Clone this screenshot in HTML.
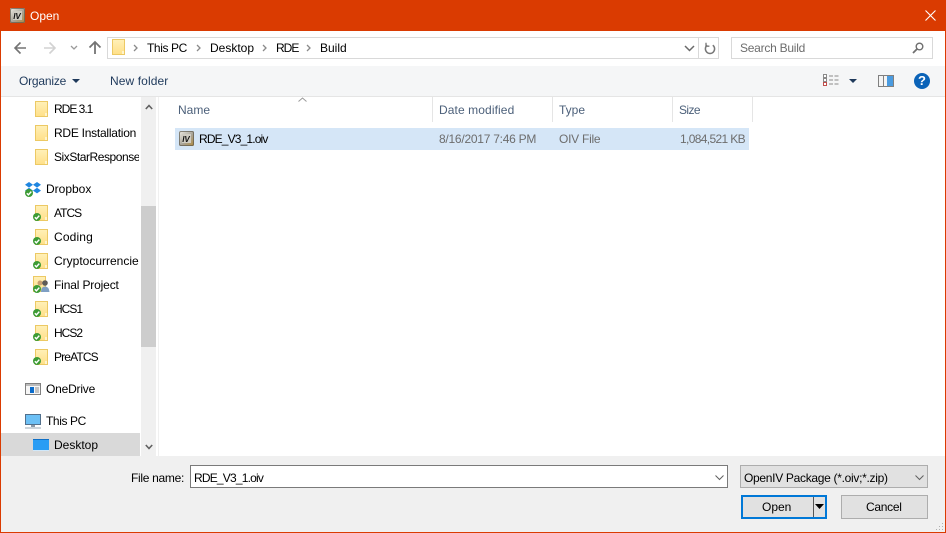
<!DOCTYPE html>
<html><head><meta charset="utf-8"><style>
html,body{margin:0;padding:0;width:946px;height:533px;overflow:hidden;background:#fff}
body{position:relative;font-family:"Liberation Sans",sans-serif;font-size:12px;color:#000}
.r{position:absolute}
.t{position:absolute;white-space:nowrap;line-height:16px;height:16px}
svg{position:absolute;overflow:visible}
.g{color:#6d6d6d}
.h{color:#4c607a}
.n{overflow:hidden}
</style></head><body>
<svg width="0" height="0" style="position:absolute"><defs>
<linearGradient id="fg" x1="0" y1="0" x2="0" y2="1"><stop offset="0" stop-color="#fff0b8"/><stop offset="1" stop-color="#ffe088"/></linearGradient>
<linearGradient id="ig" x1="0" y1="0" x2="1" y2="1"><stop offset="0" stop-color="#f0eee6"/><stop offset=".55" stop-color="#a8a498"/><stop offset="1" stop-color="#b08a3c"/></linearGradient>
<g id="fo"><rect x="0.500" y="0.500" width="12" height="15" fill="url(#fg)" stroke="#ecc964"/><rect x="10" y="12" width="2" height="3" fill="#fff4cc"/></g>
<g id="ck"><circle cx="4" cy="4" r="4" fill="#3d9b35"/><path d="M1.800 4.200L3.400 5.800L6.300 2.600" fill="none" stroke="#fff" stroke-width="1.4"/></g>
<g id="iv"><rect x="0" y="0" width="15" height="15" rx="1.500" fill="url(#ig)"/><rect x="0.500" y="0.500" width="14" height="14" rx="1.500" fill="none" stroke="#5e5a4e" stroke-opacity=".7"/><rect x="3" y="3" width="9" height="9" fill="#cfccc2"/><text x="3.200" y="10.800" font-family="Liberation Sans" font-size="8" font-weight="bold" font-style="italic" fill="#111">IV</text></g>
</defs></svg>

<div class="r" style="left:0;top:0;width:946px;height:31px;background:#da3b01"></div>
<div class="r" style="left:0;top:31px;width:1px;height:502px;background:#da3b01"></div>
<div class="r" style="left:945px;top:31px;width:1px;height:502px;background:#da3b01"></div>
<div class="r" style="left:0;top:532px;width:946px;height:1px;background:#da3b01"></div>
<svg style="left:10px;top:8px" width="15" height="15"><use href="#iv"/></svg>
<div class="t" style="left:30px;top:8px;color:#fff">Open</div>
<svg style="left:925px;top:10px" width="11" height="11"><path d="M0.500 0.500L10.500 10.500M10.500 0.500L0.500 10.500" stroke="#fff" stroke-width="1.1"/></svg>

<svg style="left:14px;top:41px" width="12" height="14"><path d="M1 7H12M6.500 1.500L1 7L6.500 12.500" fill="none" stroke="#747474" stroke-width="1.6"/></svg>
<svg style="left:44px;top:41px" width="12" height="14"><path d="M0 7H11M5.500 1.500L11 7L5.500 12.500" fill="none" stroke="#d2d2d2" stroke-width="1.6"/></svg>
<svg style="left:70px;top:45px" width="8" height="6"><path d="M1 1L4 4L7 1" fill="none" stroke="#9a9a9a" stroke-width="1.3"/></svg>
<svg style="left:88px;top:41px" width="14" height="14"><path d="M7 13V1M1.500 6.500L7 1L12.500 6.500" fill="none" stroke="#747474" stroke-width="1.8"/></svg>

<div class="r" style="left:107px;top:37px;width:610px;height:20px;border:1px solid #d9d9d9;background:#fff"></div>
<div class="r" style="left:698px;top:38px;width:1px;height:20px;background:#d9d9d9"></div>
<svg style="left:112px;top:39px" width="13" height="16"><use href="#fo"/></svg>
<svg style="left:133px;top:44px" width="6" height="8"><path d="M1 1L4 4L1 7" fill="none" stroke="#8a8a8a" stroke-width="1.3"/></svg>
<div class="t" style="left:147px;top:40px;letter-spacing:-.4px">This PC</div>
<svg style="left:196px;top:44px" width="6" height="8"><path d="M1 1L4 4L1 7" fill="none" stroke="#8a8a8a" stroke-width="1.3"/></svg>
<div class="t" style="left:210px;top:40px">Desktop</div>
<svg style="left:262px;top:44px" width="6" height="8"><path d="M1 1L4 4L1 7" fill="none" stroke="#8a8a8a" stroke-width="1.3"/></svg>
<div class="t" style="left:276px;top:40px;letter-spacing:-1px">RDE</div>
<svg style="left:306px;top:44px" width="6" height="8"><path d="M1 1L4 4L1 7" fill="none" stroke="#8a8a8a" stroke-width="1.3"/></svg>
<div class="t" style="left:320px;top:40px">Build</div>
<svg style="left:684px;top:45px" width="11" height="7"><path d="M1 1L5.500 5.500L10 1" fill="none" stroke="#6a6a6a" stroke-width="1.5"/></svg>
<svg style="left:704px;top:42px" width="12" height="13"><path d="M3.200 3.200A4.600 4.600 0 1 0 8.800 3.200" fill="none" stroke="#777" stroke-width="1.5"/><path d="M2 0.800V4.200H5.400" fill="none" stroke="#777" stroke-width="1.3"/></svg>

<div class="r" style="left:731px;top:37px;width:200px;height:20px;border:1px solid #d9d9d9;background:#fff"></div>
<div class="t g" style="left:740px;top:40px;letter-spacing:-.25px">Search Build</div>
<svg style="left:912px;top:42px" width="12" height="12"><circle cx="7.500" cy="4.500" r="3.300" fill="none" stroke="#6f6f6f" stroke-width="1.4"/><path d="M5 7L1 11" stroke="#6f6f6f" stroke-width="1.8"/></svg>

<div class="r" style="left:1px;top:66px;width:944px;height:30px;background:#f5f6f7"></div>
<div class="r" style="left:1px;top:96px;width:944px;height:1px;background:#e5e5e5"></div>
<div class="t" style="left:19px;top:73px;color:#1e395b;letter-spacing:-.2px">Organize</div>
<svg style="left:72px;top:79px" width="8" height="4"><path d="M0 0H8L4 4Z" fill="#1e395b"/></svg>
<div class="t" style="left:110px;top:73px;color:#1e395b;letter-spacing:.1px">New folder</div>
<svg style="left:823px;top:74px" width="16" height="13"><rect x="0.500" y="0.500" width="3" height="3" fill="#fff" stroke="#8a8a8a"/><rect x="0.500" y="4.500" width="3" height="3" fill="#fff" stroke="#8a8a8a"/><rect x="0.500" y="8.500" width="3" height="3" fill="#fff" stroke="#c0504d"/><path d="M6 2H10M11.500 2H15.500M6 6H10M11.500 6H15.500M6 10H10M11.500 10H15.500" stroke="#8a8a8a"/></svg>
<svg style="left:849px;top:79px" width="8" height="4"><path d="M0 0H8L4 4Z" fill="#1e395b"/></svg>
<svg style="left:878px;top:75px" width="16" height="12"><rect x="0.500" y="0.500" width="15" height="11" fill="#f4f4f4" stroke="#808080"/><rect x="9" y="1" width="6" height="10" fill="#4a9be0"/><path d="M5.500 1V11" stroke="#808080"/></svg>
<div class="r" style="left:914px;top:73px;width:16px;height:16px;border-radius:50%;background:#0b63b8;color:#fff;font-weight:bold;font-size:13px;line-height:16px;text-align:center">?</div>

<div class="r" style="left:141px;top:97px;width:15px;height:359px;background:#f0f0f0"></div>
<div class="r" style="left:141px;top:206px;width:15px;height:141px;background:#cdcdcd"></div>
<svg style="left:145px;top:104px" width="8" height="6"><path d="M0.800 5L4 1.500L7.200 5" fill="none" stroke="#606060" stroke-width="1.6"/></svg>
<svg style="left:145px;top:444px" width="8" height="6"><path d="M0.800 1L4 4.500L7.200 1" fill="none" stroke="#606060" stroke-width="1.6"/></svg>
<div class="r" style="left:158px;top:97px;width:1px;height:359px;background:#f0f0f0"></div>
<div class="r" style="left:1px;top:433px;width:139px;height:23px;background:#d9d9d9"></div>

<svg style="left:35px;top:101px" width="13" height="16"><use href="#fo"/></svg>
<div class="t n" style="left:54px;top:101px;width:85px;letter-spacing:-1px">RDE 3.1</div>
<svg style="left:35px;top:125px" width="13" height="16"><use href="#fo"/></svg>
<div class="t n" style="left:54px;top:125px;width:85px;letter-spacing:-.25px">RDE Installation T</div>
<svg style="left:35px;top:149px" width="13" height="16"><use href="#fo"/></svg>
<div class="t n" style="left:54px;top:149px;width:85px;letter-spacing:-.45px">SixStarResponse</div>

<svg style="left:25px;top:182px" width="16" height="16"><path d="M4 0L8 2.800L4 5.600L0 2.800ZM12 0L16 2.800L12 5.600L8 2.800ZM4 5.800L8 8.600L4 11.400L0 8.600ZM12 5.800L16 8.600L12 11.400L8 8.600Z" fill="#1f86e0"/><use href="#ck" x="0" y="7"/></svg>
<div class="t" style="left:46px;top:181px">Dropbox</div>

<svg style="left:33px;top:205px" width="15" height="17"><use href="#fo" x="2"/><use href="#ck" y="8"/></svg>
<div class="t" style="left:54px;top:205px;letter-spacing:-1px">ATCS</div>
<svg style="left:33px;top:229px" width="15" height="17"><use href="#fo" x="2"/><use href="#ck" y="8"/></svg>
<div class="t" style="left:54px;top:229px;letter-spacing:.15px">Coding</div>
<svg style="left:33px;top:253px" width="15" height="17"><use href="#fo" x="2"/><use href="#ck" y="8"/></svg>
<div class="t n" style="left:54px;top:253px;width:85px">Cryptocurrencies</div>
<svg style="left:33px;top:277px" width="17" height="17"><use href="#fo" y="-1"/><circle cx="7" cy="6" r="2.500" fill="#c9a070"/><circle cx="12" cy="6" r="2.800" fill="#5d5a58"/><path d="M8 15Q8 9.500 12 9.500T16.500 15Z" fill="#7e9fc4"/><use href="#ck" y="8"/></svg>
<div class="t" style="left:54px;top:277px;letter-spacing:-.15px">Final Project</div>
<svg style="left:33px;top:301px" width="15" height="17"><use href="#fo" x="2"/><use href="#ck" y="8"/></svg>
<div class="t" style="left:54px;top:301px;letter-spacing:-1px">HCS1</div>
<svg style="left:33px;top:325px" width="15" height="17"><use href="#fo" x="2"/><use href="#ck" y="8"/></svg>
<div class="t" style="left:54px;top:325px;letter-spacing:-1px">HCS2</div>
<svg style="left:33px;top:349px" width="15" height="17"><use href="#fo" x="2"/><use href="#ck" y="8"/></svg>
<div class="t" style="left:54px;top:349px;letter-spacing:-.85px">PreATCS</div>

<svg style="left:25px;top:383px" width="16" height="12"><rect x="0.500" y="0.500" width="15" height="11" fill="#f6f6f6" stroke="#808080"/><rect x="1" y="1" width="14" height="2" fill="#bbb"/><rect x="5" y="4" width="4" height="6" fill="#0b6ccb"/><path d="M10 5H14M10 7H14M10 9H14" stroke="#909090"/></svg>
<div class="t" style="left:46px;top:381px;letter-spacing:-.2px">OneDrive</div>

<svg style="left:25px;top:414px" width="16" height="15"><rect x="0.500" y="0.500" width="15" height="10" fill="#6cc0f5" stroke="#52708c"/><path d="M6 12H10" stroke="#8a9aa8" stroke-width="2"/><path d="M0 14H16" stroke="#9aa8b4"/></svg>
<div class="t" style="left:46px;top:413px;letter-spacing:-.4px">This PC</div>
<svg style="left:33px;top:439px" width="16" height="12"><rect x="0" y="0" width="16" height="12" fill="#2a9df4"/><rect x="0" y="11" width="16" height="1" fill="#d0e8fa"/><rect x="0" y="0" width="16" height="1" fill="#0f6fc6"/></svg>
<div class="t" style="left:54px;top:437px">Desktop</div>

<div class="t h" style="left:178px;top:102px">Name</div>
<svg style="left:298px;top:97px" width="9" height="5"><path d="M0.500 4.500L4.500 1L8.500 4.500" fill="none" stroke="#9a9a9a"/></svg>
<div class="r" style="left:432px;top:97px;width:1px;height:25px;background:#e5e5e5"></div>
<div class="t h" style="left:439px;top:102px;letter-spacing:.1px">Date modified</div>
<div class="r" style="left:552px;top:97px;width:1px;height:25px;background:#e5e5e5"></div>
<div class="t h" style="left:559px;top:102px">Type</div>
<div class="r" style="left:672px;top:97px;width:1px;height:25px;background:#e5e5e5"></div>
<div class="t h" style="left:679px;top:102px;letter-spacing:-.6px">Size</div>
<div class="r" style="left:752px;top:97px;width:1px;height:25px;background:#e5e5e5"></div>

<div class="r" style="left:175px;top:128px;width:574px;height:22px;background:#d5e6f7"></div>
<svg style="left:179px;top:131px" width="15" height="15"><use href="#iv"/></svg>
<div class="t" style="left:199px;top:131px;letter-spacing:-.85px">RDE_V3_1.oiv</div>
<div class="t g" style="left:439px;top:131px;letter-spacing:-.25px">8/16/2017 7:46 PM</div>
<div class="t g" style="left:559px;top:131px;letter-spacing:-.25px">OIV File</div>
<div class="t g" style="left:680px;top:131px;letter-spacing:-.65px">1,084,521 KB</div>

<div class="r" style="left:1px;top:456px;width:944px;height:76px;background:#f0f0f0"></div>
<div class="t" style="left:131px;top:470px;letter-spacing:-.3px">File name:</div>
<div class="r" style="left:190px;top:465px;width:536px;height:21px;border:1px solid #7a7a7a;background:#fff"></div>
<div class="t" style="left:194px;top:470px;letter-spacing:-.8px">RDE_V3_1.oiv</div>
<svg style="left:715px;top:475px" width="9" height="6"><path d="M0.500 0.500L4.500 4.500L8.500 0.500" fill="none" stroke="#606060"/></svg>
<div class="r" style="left:740px;top:465px;width:186px;height:21px;border:1px solid #adadad;background:#e1e1e1"></div>
<div class="t" style="left:744px;top:470px;letter-spacing:-.3px">OpenIV Package (*.oiv;*.zip)</div>
<svg style="left:915px;top:475px" width="9" height="6"><path d="M0.500 0.500L4.500 4.500L8.500 0.500" fill="none" stroke="#606060"/></svg>
<div class="r" style="left:741px;top:495px;width:82px;height:20px;border:2px solid #0078d7;background:#e1e1e1"></div>
<div class="t" style="left:762px;top:499px">Open</div>
<div class="r" style="left:813px;top:497px;width:1px;height:20px;background:#555"></div>
<svg style="left:815px;top:504px" width="9" height="5"><path d="M0 0H9L4.500 5Z" fill="#000"/></svg>
<div class="r" style="left:841px;top:495px;width:85px;height:22px;border:1px solid #adadad;background:#e1e1e1"></div>
<div class="t" style="left:866px;top:499px;letter-spacing:-.3px">Cancel</div>
<svg style="left:936px;top:522px" width="8" height="8"><path d="M6 1h1v1h-1zM3 4h1v1h-1zM6 4h1v1h-1zM0 7h1v1h-1zM3 7h1v1h-1zM6 7h1v1h-1z" fill="#b0b0b0"/></svg>
</body></html>
